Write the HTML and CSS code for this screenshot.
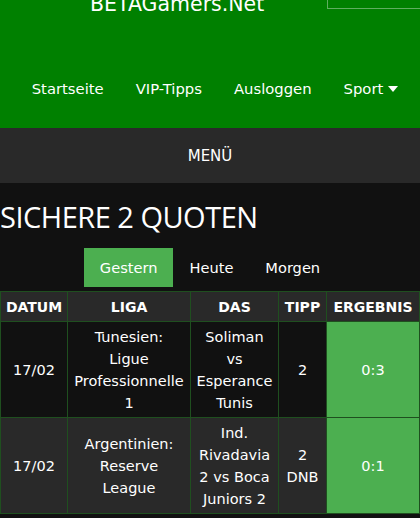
FILE: index.html
```
<!DOCTYPE html>
<html lang="de">
<head>
<meta charset="utf-8">
<title>Sichere 2 Quoten</title>
<link rel="stylesheet" href="styles.css">
</head>
<body>
<header class="site-header">
  <div class="brand-row">
    <div class="brand">BETAGamers.Net</div>
    <div class="search-box"></div>
  </div>
  <nav class="main-nav">
    <a class="nav-link" href="#">Startseite</a>
    <a class="nav-link" href="#">VIP-Tipps</a>
    <a class="nav-link" href="#">Ausloggen</a>
    <a class="nav-link" href="#">Sport <span class="caret"></span></a>
  </nav>
</header>
<div class="menu-bar">MENÜ</div>
<main class="content">
  <h1 class="page-title">SICHERE 2 QUOTEN</h1>
  <div class="tabs">
    <a class="tab tab-active" href="#">Gestern</a>
    <a class="tab" href="#">Heute</a>
    <a class="tab" href="#">Morgen</a>
  </div>
  <table class="tips">
    <colgroup>
      <col class="c-date"><col class="c-league"><col class="c-match"><col class="c-tip"><col class="c-result">
    </colgroup>
    <thead>
      <tr><th>DATUM</th><th>LIGA</th><th>DAS</th><th>TIPP</th><th>ERGEBNIS</th></tr>
    </thead>
    <tbody>
      <tr class="row-dark">
        <td>17/02</td>
        <td>Tunesien:<br>Ligue<br>Professionnelle<br>1</td>
        <td>Soliman<br>vs<br>Esperance<br>Tunis</td>
        <td>2</td>
        <td class="win">0:3</td>
      </tr>
      <tr class="row-light">
        <td>17/02</td>
        <td>Argentinien:<br>Reserve<br>League</td>
        <td>Ind.<br>Rivadavia<br>2 vs Boca<br>Juniors 2</td>
        <td>2<br>DNB</td>
        <td class="win">0:1</td>
      </tr>
    </tbody>
  </table>
</main>
</body>
</html>
```

FILE: styles.css
```
html, body {
  margin: 0;
  padding: 0;
  background: #111111;
  color: #ffffff;
  font-family: "DejaVu Sans", Verdana, sans-serif;
  height: 518px;
  overflow: hidden;
}

.site-header {
  background: #008000;
  height: 128px;
  display: flex;
  flex-direction: column;
}

.brand-row {
  display: flex;
  align-items: flex-start;
  height: 20px;
  margin-top: -7px;
}

.brand {
  font-size: 20.5px;
  line-height: 22px;
  margin-left: 90px;
  color: #ffffff;
}

.search-box {
  margin-left: auto;
  margin-top: -4px;
  width: 93px;
  height: 20px;
  border: 1px solid #5fae5f;
  border-right: none;
  box-sizing: border-box;
}

.main-nav {
  display: flex;
  justify-content: center;
  margin-top: 64px;
  padding-left: 10px;
}

.nav-link {
  color: #ffffff;
  text-decoration: none;
  font-size: 14.8px;
  line-height: 24px;
  padding: 0 16px;
  display: flex;
  align-items: center;
}

.caret {
  display: inline-block;
  width: 0;
  height: 0;
  margin-left: 5px;
  border-left: 5px solid transparent;
  border-right: 5px solid transparent;
  border-top: 6px solid #ffffff;
}

.menu-bar {
  background: #292929;
  height: 55px;
  display: flex;
  align-items: center;
  justify-content: center;
  font-size: 15px;
}

.content {
  padding: 0;
}

.page-title {
  margin: 0;
  padding-top: 14px;
  font-family: "Open Sans", "Noto Sans", sans-serif;
  font-weight: 400;
  font-size: 29px;
  letter-spacing: -0.5px;
  line-height: 40px;
  height: 51px;
}

.tabs {
  display: flex;
  justify-content: center;
  margin-bottom: 4px;
}

.tab {
  color: #ffffff;
  text-decoration: none;
  font-size: 14.6px;
  height: 39px;
  display: flex;
  align-items: center;
  padding: 0 16px;
}

.tab-active {
  background: #4caf50;
}

.tips {
  border-collapse: collapse;
  width: 419px;
  table-layout: fixed;
  font-size: 14.5px;
}

.c-date { width: 67px; }
.c-league { width: 123px; }
.c-match { width: 88px; }
.c-tip { width: 48px; }
.c-result { width: 93px; }

.tips th, .tips td {
  border: 1.5px solid #1f4f1f;
  text-align: center;
  vertical-align: middle;
  padding: 0;
}

.tips th {
  background: #292929;
  font-weight: bold;
  font-size: 14px;
  height: 29px;
  white-space: nowrap;
}

.tips td {
  line-height: 22px;
  height: 95px;
}

.row-dark td { background: #111111; }
.row-light td { background: #292929; }

.tips td.win {
  background: #4caf50;
}
```
